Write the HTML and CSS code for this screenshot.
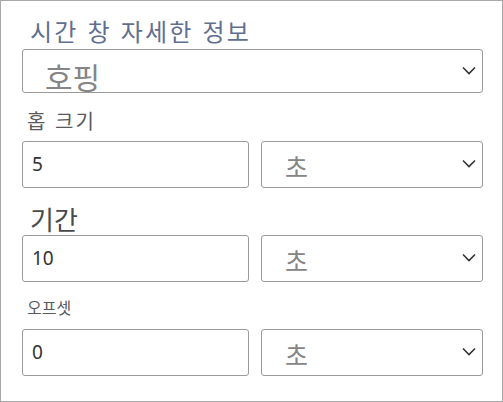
FILE: index.html
```html
<!DOCTYPE html>
<html lang="ko">
<head>
<meta charset="utf-8">
<link rel="stylesheet" href="styles.css">
</head>
<body>
<div class="panel">
  <div class="title">시간 창 자세한 정보</div>
  <div class="select select-main">
    <span class="select-text big">호핑</span>
    <svg class="chev" width="14" height="9" viewBox="0 0 14 9"><path d="M1 1.5 L7 7.5 L13 1.5" fill="none" stroke="#333" stroke-width="1.6"/></svg>
  </div>
  <div class="label label-hop">홉 크기</div>
  <div class="row">
    <div class="input">5</div>
    <div class="select">
      <span class="select-text unit">초</span>
      <svg class="chev" width="14" height="9" viewBox="0 0 14 9"><path d="M1 1.5 L7 7.5 L13 1.5" fill="none" stroke="#333" stroke-width="1.6"/></svg>
    </div>
  </div>
  <div class="label label-dur">기간</div>
  <div class="row">
    <div class="input">10</div>
    <div class="select">
      <span class="select-text unit">초</span>
      <svg class="chev" width="14" height="9" viewBox="0 0 14 9"><path d="M1 1.5 L7 7.5 L13 1.5" fill="none" stroke="#333" stroke-width="1.6"/></svg>
    </div>
  </div>
  <div class="label label-off">오프셋</div>
  <div class="row">
    <div class="input">0</div>
    <div class="select">
      <span class="select-text unit">초</span>
      <svg class="chev" width="14" height="9" viewBox="0 0 14 9"><path d="M1 1.5 L7 7.5 L13 1.5" fill="none" stroke="#333" stroke-width="1.6"/></svg>
    </div>
  </div>
</div>
</body>
</html>
```
FILE: styles.css
```css
html, body {
  margin: 0;
  padding: 0;
  background: #fff;
}
.panel {
  box-sizing: border-box;
  width: 503px;
  height: 402px;
  border: 1px solid #a8a8a8;
  padding: 18px 19px 0 21px;
  font-family: "Noto Sans CJK KR", "Noto Sans", sans-serif;
  overflow: hidden;
}
.title {
  font-size: 24px;
  line-height: 24px;
  height: 24px;
  color: #5f6f90;
  letter-spacing: 2.2px;
  padding-left: 8px;
  white-space: nowrap;
}
.select {
  box-sizing: border-box;
  border: 1px solid #9a9a9a;
  border-radius: 3px;
  display: flex;
  justify-content: space-between;
  align-items: flex-start;
  overflow: hidden;
  background: #fff;
}
.select-main {
  margin-top: 6px;
  height: 44px;
  padding: 11px 6px 0 22px;
}
.select-main .chev {
  margin-top: 5px;
}
.select-text {
  color: #858585;
  white-space: nowrap;
}
.big {
  font-size: 30px;
  line-height: 30px;
}
.unit {
  font-size: 25px;
  line-height: 25px;
}
.row .select {
  padding: 12px 6px 0 23px;
}
.row .chev {
  margin-top: 5px;
}
.label {
  color: #5a5a5a;
  white-space: nowrap;
}
.label-hop {
  font-size: 20px;
  line-height: 20px;
  margin-top: 18px;
  padding-left: 5px;
  letter-spacing: 2px;
}
.label-dur {
  font-size: 26px;
  line-height: 26px;
  margin-top: 18px;
  padding-left: 8px;
  color: #4a4a4a;
}
.label-off {
  font-size: 16px;
  line-height: 16px;
  margin-top: 17px;
  padding-left: 5px;
}
.row {
  display: grid;
  grid-template-columns: 227px 1fr;
  column-gap: 12px;
  height: 47px;
  margin-top: 10px;
}
.label-dur + .row {
  margin-top: 3px;
}
.label-off + .row {
  margin-top: 14px;
}
.input {
  box-sizing: border-box;
  border: 1px solid #9a9a9a;
  border-radius: 3px;
  font-family: "Noto Sans", "Open Sans", sans-serif;
  font-size: 19px;
  line-height: 45px;
  color: #333;
  padding-left: 9px;
}
```
